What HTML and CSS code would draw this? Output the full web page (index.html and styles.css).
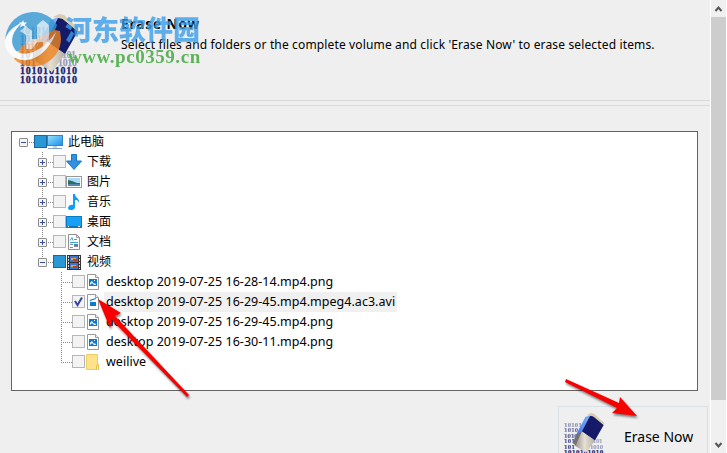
FILE: index.html
```html
<!DOCTYPE html>
<html lang="zh-CN">
<head>
  <meta charset="UTF-8">
  <title>Erase Now</title>
  <link rel="stylesheet" href="styles.css">
</head>
<body>
  <svg class="defs" width="0" height="0">
    <defs>
      <linearGradient id="screen" x1="0" y1="0" x2="1" y2="1">
        <stop offset="0" stop-color="#9be3ff"/><stop offset="1" stop-color="#168ee9"/>
      </linearGradient>
      <linearGradient id="rubber" x1="0" y1="0" x2="1" y2="0">
        <stop offset="0" stop-color="#8f8a86"/><stop offset=".5" stop-color="#e6e0d4"/><stop offset="1" stop-color="#b5aea4"/>
      </linearGradient>
      <linearGradient id="side" x1="0" y1="1" x2="1" y2="0">
        <stop offset="0" stop-color="#2869ef"/><stop offset="1" stop-color="#7db4ff"/>
      </linearGradient>
    </defs>
    <symbol id="pc" viewBox="0 0 16 16">
      <rect x=".5" y="1.5" width="15" height="10" fill="url(#screen)" stroke="#3187bd"/>
      <path d="M6 12h4v2H6z" fill="#bcd6e5"/><path d="M1 14.5h14" stroke="#7fa3b9"/>
    </symbol>
    <symbol id="down" viewBox="0 0 16 16">
      <path d="M5.500 .5h5V7h5L8 15.500 .5 7h5z" fill="#338fe2" stroke="#1976c7"/>
    </symbol>
    <symbol id="photo" viewBox="0 0 16 16">
      <rect x=".5" y="2.5" width="15" height="11" fill="#fff" stroke="#999"/>
      <path d="M2 4h12v8H2z" fill="#a9dcf8"/><path d="M2 6l4 1 5 2h3v3H2z" fill="#2e6b64"/><path d="M2 10h12v2H2z" fill="#5787a6"/>
    </symbol>
    <symbol id="note" viewBox="0 0 16 16">
      <path d="M7 0h2c0 4 5 4 4 9-1-3-2-3-4-3v7c0 4-7 4-7 1 0-2 3-4 5-3z" fill="#109df5"/>
    </symbol>
    <symbol id="desk" viewBox="0 0 16 16">
      <rect x=".5" y="2.5" width="15" height="11" fill="#18a0f5" stroke="#087cc8"/>
      <path d="M1 12.5h14" stroke="#0873bd"/><path d="M2 12.5h1M12 12.5h2" stroke="#fff"/>
    </symbol>
    <symbol id="doc" viewBox="0 0 16 16">
      <path d="M2.500 .5h8l3 3v12h-11z" fill="#fff" stroke="#8f8f8f"/><path d="M10.500 .5v3h3" fill="none" stroke="#999"/>
      <path d="M4 6.500l2-3 1 3M8 5.500h3M4 8.500h8M4 13.500h3" fill="none" stroke="#38a2d7"/><path d="M4 10.500h3M8 12.500h4" stroke="#888"/><path d="M8 10h4v2H8z" fill="#4289b5"/>
    </symbol>
    <symbol id="film" viewBox="0 0 16 16">
      <path d="M1 1h14v15H1z" fill="#333"/><path d="M4 2h8v6H4zM4 9h8v6H4z" fill="#3c76d2"/>
      <path d="M5 4h5v2H5zM5 11h5v2H5z" fill="#e9a52d"/><path d="M7 5h4v2H7zM7 12h4v2H7z" fill="#bf3c2d"/>
      <path d="M2.500 2v13M13.500 2v13" stroke="#ddd" stroke-dasharray="2 1"/>
    </symbol>
    <symbol id="png" viewBox="0 0 16 16">
      <path d="M1.500 .5h8l3 3v12h-11z" fill="#fff" stroke="#999"/><path d="M9.500 .5v3h3" fill="#eee" stroke="#999"/>
      <path d="M3 5h8v7H3z" fill="#0b79cd"/><path d="M4 11V9l2-2 2 3 1-1 1 2H8L6 9z" fill="#fff"/><path d="M8 6h1v1H8z" fill="#fff"/>
    </symbol>
    <symbol id="avi" viewBox="0 0 16 16">
      <path d="M1.500 .5h8l3 3v12h-11z" fill="#fff" stroke="#999"/><path d="M9.500 .5v3h3" fill="#eee" stroke="#999"/>
      <path d="M4 8h6v4H4zM3.500 6l6-2 .5 1-6 2z" fill="#0b79cd"/>
    </symbol>
    <symbol id="folder" viewBox="0 0 16 16">
      <path d="M.5 .5h11v10h1v5H.5z" fill="#ffe28a" stroke="#efcd65"/><path d="M10.500 15.500v-4l2-1v5" fill="#fff0b7" stroke="#e5be50"/>
    </symbol>
    <symbol id="eraser" viewBox="0 0 64 70">
      <g class="digits">
        <text x="0" y="20" opacity=".45" textLength="26">10101</text>
        <text x="0" y="28" opacity=".6" textLength="26">10101</text>
        <text x="0" y="36" opacity=".7" textLength="20">1010</text>
        <text x="0" y="44" opacity=".75" textLength="16">101</text>
        <text x="42" y="44" opacity=".35" textLength="14">101</text>
        <text x="0" y="52" opacity=".8" textLength="16">101</text>
        <text x="38" y="52" opacity=".4" textLength="19">1010</text>
        <text x="0" y="60" textLength="57">1010101010</text>
        <text x="0" y="69" textLength="57">1010101010</text>
      </g>
      <path d="M38 3l-7 3-13 25-5 13 14-17z" fill="url(#side)"/>
      <path d="M39 2l19 15-13 23-19-13z" fill="#151b69"/>
      <path d="M26 27l19 13-13 18-17-11z" fill="url(#rubber)"/>
      <path d="M18 31l8-4-9 20-4-3z" fill="#777276"/>
      <path d="M33 3l6-3 5 1 15 14-1 3L43 5z" fill="#d9cdb0"/>
    </symbol>
  </svg>

  <div class="window">
    <header class="header">
      <svg class="eraser"><use href="#eraser"/></svg>
      <div class="heading">
        <h1>Erase Now</h1>
        <p>Select files and folders or the complete volume and click 'Erase Now' to erase selected items.</p>
      </div>
    </header>
    <div class="divider"></div>

    <div class="tree">
      <div class="row root"><span class="join"><i class="box minus"></i></span><i class="check full"></i><svg class="icon"><use href="#pc"/></svg><span class="name">此电脑</span></div>
      <div class="row"><span class="join"><i class="box plus"></i></span><i class="check"></i><svg class="icon"><use href="#down"/></svg><span class="name">下载</span></div>
      <div class="row"><span class="join"><i class="box plus"></i></span><i class="check"></i><svg class="icon"><use href="#photo"/></svg><span class="name">图片</span></div>
      <div class="row"><span class="join"><i class="box plus"></i></span><i class="check"></i><svg class="icon"><use href="#note"/></svg><span class="name">音乐</span></div>
      <div class="row"><span class="join"><i class="box plus"></i></span><i class="check"></i><svg class="icon"><use href="#desk"/></svg><span class="name">桌面</span></div>
      <div class="row"><span class="join"><i class="box plus"></i></span><i class="check"></i><svg class="icon"><use href="#doc"/></svg><span class="name">文档</span></div>
      <div class="row last"><span class="join"><i class="box minus"></i></span><i class="check full"></i><svg class="icon"><use href="#film"/></svg><span class="name">视频</span></div>
      <div class="row file"><span class="join"></span><i class="check"></i><svg class="icon"><use href="#png"/></svg><span class="name">desktop 2019-07-25 16-28-14.mp4.png</span></div>
      <div class="row file"><span class="join"></span><i class="check"><svg viewBox="0 0 11 11"><path d="M2 5l2.500 4L9 1.500" fill="none" stroke="#35479b" stroke-width="2"/></svg></i><svg class="icon"><use href="#avi"/></svg><span class="name selected">desktop 2019-07-25 16-29-45.mp4.mpeg4.ac3.avi</span></div>
      <div class="row file"><span class="join"></span><i class="check"></i><svg class="icon"><use href="#png"/></svg><span class="name">desktop 2019-07-25 16-29-45.mp4.png</span></div>
      <div class="row file"><span class="join"></span><i class="check"></i><svg class="icon"><use href="#png"/></svg><span class="name">desktop 2019-07-25 16-30-11.mp4.png</span></div>
      <div class="row file last"><span class="join"></span><i class="check"></i><svg class="icon"><use href="#folder"/></svg><span class="name">weilive</span></div>
    </div>

    <button class="erase-btn"><svg class="small-eraser"><use href="#eraser"/></svg><span>Erase Now</span></button>
  </div>

  <div class="scrollbar">
    <svg class="arrow" viewBox="0 0 15 17"><path d="M4.500 11l3-3.500 3 3.500"/></svg>
    <div class="thumb"></div>
    <svg class="arrow bottom" viewBox="0 0 15 17"><path d="M4.500 7l3 3.500 3-3.500"/></svg>
  </div>

  <div class="watermark">
    <svg class="logo" viewBox="0 0 60 60">
      <path d="M2 38A28 28 0 0 1 53 17L48 30 12 44z" fill="#3499d4"/>
      <path d="M57 31A28 28 0 0 1 10 51L18 38 50 22l6 1z" fill="#ee8420"/>
      <path d="M1 32C3 24 10 18 19 14 8 23 6 33 10 40c5 10 26 8 42-16-7 21-25 32-38 27C4 47 0 40 1 32z" fill="#fff"/>
      <path d="M16 23l6-5 6 5v8h5V17l6-5 6 5v17l-6 5v-5h-6l-5 7h-6V27z" fill="#fff" opacity=".7"/>
      <path d="M19 12l1 2.500h3l-2 2 1 3-3-2-3 2 1-3-2-2h3z" fill="#fff"/>
    </svg>
    <div class="wm-cn">河东软件园</div>
    <div class="wm-url">www.pc0359.cn</div>
  </div>

  <svg class="pointers" viewBox="0 0 727 453">
    <g fill="#f80000">
      <path d="M98 299l23 14-6 3 74 79-2 2-75-77-2 8z"/>
      <path d="M566 379l53 24 1-6 17 19-25-3 5-5-52-26z"/>
    </g>
  </svg>
</body>
</html>
```
FILE: styles.css
```css
* {
  box-sizing: border-box;
}
body {
  margin: 0;
  width: 727px;
  height: 453px;
  display: flex;
  overflow: hidden;
  position: relative;
  background: #efefef;
  color: #000;
  font-family: "Noto Sans", "Noto Sans CJK SC", sans-serif;
}
.defs {
  position: absolute;
}
.window {
  width: 710px;
  height: 453px;
  overflow: hidden;
}
.header {
  height: 100px;
  padding: 14px 0 0 20px;
  display: flex;
}
.eraser {
  width: 64px;
  height: 70px;
  flex: none;
}
.digits {
  font: bold 10px "Liberation Serif", serif;
  fill: #171d70;
  stroke: #171d70;
  stroke-width: .3px;
}
.heading {
  margin-left: 37px;
  white-space: nowrap;
}
h1 {
  margin: 2px 0 0;
  font-size: 13.5px;
  line-height: 16px;
  letter-spacing: .95px;
}
p {
  margin: 4px 0 0;
  font-size: 12px;
  line-height: 18px;
  letter-spacing: .145px;
}
.divider {
  height: 6px;
  border-top: 1px solid #dadada;
  border-bottom: 1px solid #dadada;
}
.tree {
  width: 687px;
  height: 260px;
  margin: 25px 0 0 11px;
  border: 1px solid #646464;
  background: #fff;
}
.row {
  height: 20px;
  padding-left: 26px;
  display: flex;
}
.row.root {
  padding-left: 7px;
}
.row.file {
  padding-left: 45px;
}
.join {
  width: 15px;
  height: 20px;
  padding-top: 6px;
  flex: none;
  background:
    repeating-linear-gradient(to bottom, #888 0 1px, transparent 1px 2px) 4px 0 / 1px 20px no-repeat,
    repeating-linear-gradient(to right, #888 0 1px, transparent 1px 2px) 4px 10px / 11px 1px no-repeat;
}
.root .join {
  background: repeating-linear-gradient(to right, #888 0 1px, transparent 1px 2px) 4px 10px / 11px 1px no-repeat;
}
.last .join {
  background-size: 1px 11px, 11px 1px;
}
.box {
  display: block;
  width: 9px;
  height: 9px;
  border: 1px solid #8c8c8c;
  border-radius: 1px;
  background: linear-gradient(#35509a, #35509a) 1px 3px / 5px 1px no-repeat, #f4f4f4;
}
.plus {
  background: linear-gradient(#35509a, #35509a) 1px 3px / 5px 1px no-repeat, linear-gradient(#35509a, #35509a) 3px 1px / 1px 5px no-repeat, #f4f4f4;
}
.check {
  width: 13px;
  height: 13px;
  margin-top: 3px;
  border: 1px solid #b3b7bb;
  background: #f3f3f3;
  flex: none;
}
.check svg {
  display: block;
}
.check.full {
  border-color: #1b669a;
  background: #2b98d6;
}
.icon {
  width: 16px;
  height: 16px;
  margin-top: 2px;
  flex: none;
}
.file .icon {
  margin-left: 1px;
}
.name {
  height: 20px;
  margin-left: 3px;
  padding: 0 2px;
  font-size: 12.5px;
  line-height: 20px;
  white-space: nowrap;
}
.row:not(.file) .name {
  font-size: 12px;
}
.file .name {
  margin-left: 2px;
  letter-spacing: .03px;
}
.selected {
  background: #f0f0f0;
}
.erase-btn {
  width: 150px;
  height: 56px;
  margin: 15px 0 0 558px;
  padding: 6px 0 0 5px;
  display: flex;
  border: 1px solid #d9e1e8;
  background: #efefef;
  color: #000;
  font-family: "Noto Sans", sans-serif;
  font-size: 14px;
  white-space: nowrap;
}
.small-eraser {
  width: 44px;
  height: 48px;
  flex: none;
}
.erase-btn span {
  margin: 14px 0 0 16px;
  line-height: 20px;
}
.scrollbar {
  width: 17px;
  height: 453px;
  display: flex;
  flex-direction: column;
  border-left: 1px solid #fff;
  border-right: 1px solid #fff;
  background: #f0f0f0;
}
.arrow {
  width: 15px;
  height: 17px;
}
.arrow path {
  fill: none;
  stroke: #555;
  stroke-width: 2;
}
.thumb {
  height: 383px;
  background: #cdcdcd;
}
.bottom {
  margin-top: auto;
}
.watermark {
  position: absolute;
  left: 4px;
  top: 8px;
  width: 200px;
  height: 62px;
}
.logo {
  position: absolute;
  width: 60px;
  height: 60px;
  opacity: .8;
}
.wm-cn {
  position: absolute;
  left: 61px;
  top: 4px;
  color: #3c9ee8;
  font: 900 27px/34px "Noto Sans CJK SC", sans-serif;
  white-space: nowrap;
  opacity: .8;
}
.wm-url {
  position: absolute;
  left: 64px;
  top: 37px;
  color: #4fad4b;
  font: bold 19px/24px "Liberation Serif", serif;
  letter-spacing: .55px;
  white-space: nowrap;
  opacity: .9;
}
.pointers {
  position: absolute;
  left: 0;
  top: 0;
  width: 727px;
  height: 453px;
  pointer-events: none;
  filter: drop-shadow(1px 2px 1px rgba(0, 0, 0, .5));
}
```
